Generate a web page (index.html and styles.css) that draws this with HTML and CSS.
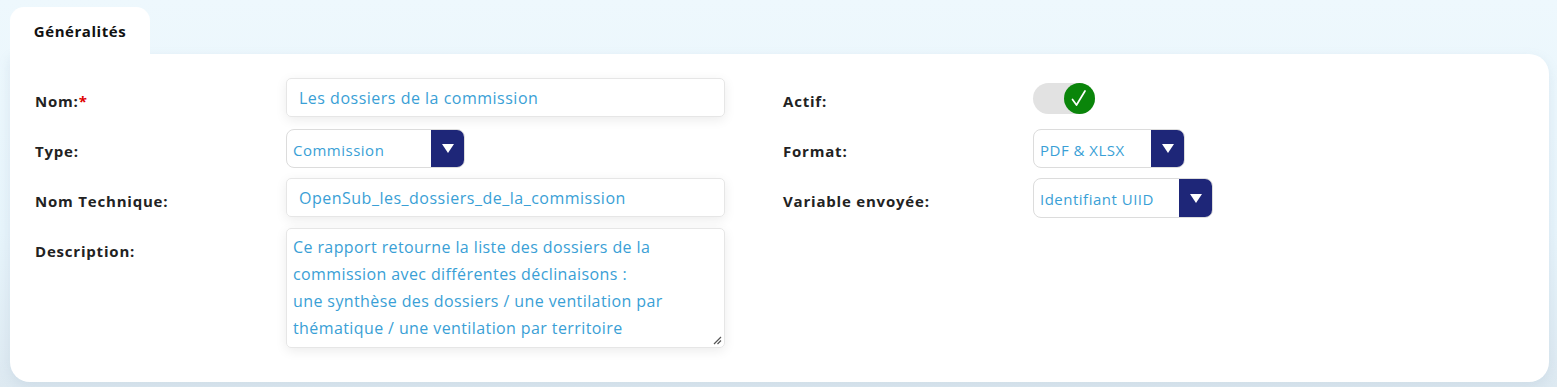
FILE: index.html
```html
<!DOCTYPE html>
<html lang="fr">
  <head>
    <title>Rapport - Généralités</title>
    <meta charset="UTF-8">
    <link rel="stylesheet" href="styles.css">
  </head>
  <body>
    <div class="page">
      <div class="tabs">
        <div class="tab tab-active">Généralités</div>
      </div>
      <div class="card">
        <div class="form-col form-left">
          <label class="label">Nom:<span class="required">*</span></label>
          <div class="input">Les dossiers de la commission</div>

          <label class="label">Type:</label>
          <div class="select select-type">
            <span class="select-value">Commission</span>
            <span class="select-btn"><span class="arrow"></span></span>
          </div>

          <label class="label">Nom Technique:</label>
          <div class="input">OpenSub_les_dossiers_de_la_commission</div>

          <label class="label">Description:</label>
          <div class="textarea">
            Ce rapport retourne la liste des dossiers de la<br>
            commission avec différentes déclinaisons :<br>
            une synthèse des dossiers / une ventilation par<br>
            thématique / une ventilation par territoire
            <svg class="grip" width="9" height="9" viewBox="0 0 9 9">
              <path d="M1 8 L8 1 M4.5 8 L8 4.5" stroke="#555" stroke-width="1.2"/>
            </svg>
          </div>
        </div>

        <div class="form-col form-right">
          <label class="label">Actif:</label>
          <div class="toggle-row">
            <div class="toggle">
              <span class="knob">
                <svg width="31" height="31" viewBox="0 0 31 31">
                  <path d="M8.5 16.5 L12.5 22 L21 8" fill="none" stroke="#fff" stroke-width="1.7" stroke-linecap="round" stroke-linejoin="round"/>
                </svg>
              </span>
            </div>
          </div>

          <label class="label">Format:</label>
          <div class="select select-format">
            <span class="select-value">PDF &amp; XLSX</span>
            <span class="select-btn"><span class="arrow"></span></span>
          </div>

          <label class="label">Variable envoyée:</label>
          <div class="select select-var">
            <span class="select-value">Identifiant UIID</span>
            <span class="select-btn"><span class="arrow"></span></span>
          </div>
        </div>
      </div>
    </div>
  </body>
</html>
```

FILE: styles.css
```css
body {
  margin: 0;
  padding: 0;
  background: linear-gradient(to bottom, #eef8fd 0%, #e7f4fb 60%, #dde9f1 100%);
  font-family: "Open Sans", "Noto Sans", sans-serif;
  height: 387px;
  overflow: hidden;
}

.page {
  padding: 7px 8px 0 10px;
}

.tabs {
  display: flex;
}

.tab {
  width: 140px;
  height: 47px;
  box-sizing: border-box;
  display: flex;
  align-items: center;
  justify-content: center;
  font-size: 15px;
  font-weight: 700;
  color: #111;
  letter-spacing: 0.55px;
}

.tab-active {
  background-color: #fff;
  border-radius: 14px 14px 0 0;
}

.card {
  display: flex;
  gap: 58px;
  background-color: #fff;
  border-radius: 0 20px 20px 20px;
  padding: 24px 25px 34px 25px;
  height: 328px;
  box-sizing: border-box;
  box-shadow: 0 4px 12px rgba(120, 150, 175, 0.15);
}

.form-col {
  display: grid;
  align-items: start;
  row-gap: 11px;
}

.form-left {
  grid-template-columns: 251px 439px;
  grid-template-rows: 39px 39px 39px 120px;
}

.form-right {
  grid-template-columns: 250px auto;
  grid-template-rows: 39px 39px 39px;
  align-content: start;
}

.label {
  padding-top: 13px;
  line-height: 20px;
  font-size: 15px;
  font-weight: 700;
  color: #222;
  letter-spacing: 0.8px;
}

.required {
  color: #e00000;
}

.input {
  height: 39px;
  box-sizing: border-box;
  border: 1px solid #e6e6e6;
  border-radius: 5px;
  padding: 0 12px;
  display: flex;
  align-items: center;
  font-size: 16px;
  color: #3a9fd6;
  letter-spacing: 0.5px;
  box-shadow: 0 3px 12px rgba(0, 0, 0, 0.08);
}

.textarea {
  position: relative;
  height: 120px;
  box-sizing: border-box;
  border: 1px solid #e6e6e6;
  border-radius: 5px;
  padding: 5px 6px;
  font-size: 16px;
  line-height: 27px;
  color: #3a9fd6;
  letter-spacing: 0.4px;
  box-shadow: 0 3px 12px rgba(0, 0, 0, 0.08);
}

.grip {
  position: absolute;
  right: 2px;
  bottom: 2px;
}

.select {
  display: flex;
  height: 39px;
  margin-top: 1px;
  box-sizing: border-box;
  border: 1px solid #dcdcdc;
  border-radius: 8px;
  overflow: hidden;
}

.select-type {
  width: 179px;
}

.select-format {
  width: 152px;
}

.select-var {
  width: 180px;
  margin-top: 0;
  height: 40px;
}

.select-value {
  flex: 1;
  display: flex;
  align-items: center;
  padding: 2px 0 0 6px;
  font-size: 15px;
  color: #3a9fd6;
  letter-spacing: 0.5px;
}

.select-btn {
  width: 34px;
  background-color: #1e2678;
  display: flex;
  align-items: center;
  justify-content: center;
  margin: -1px -1px -1px 0;
}

.arrow {
  width: 0;
  height: 0;
  border-left: 6px solid transparent;
  border-right: 6px solid transparent;
  border-top: 9px solid #fff;
}

.toggle-row {
  height: 39px;
  display: flex;
  align-items: center;
  padding-top: 2px;
  box-sizing: border-box;
}

.toggle {
  width: 62px;
  height: 31px;
  border-radius: 16px;
  background-color: #e2e2e2;
  display: flex;
  justify-content: flex-end;
}

.knob {
  width: 31px;
  height: 31px;
  border-radius: 50%;
  background-color: #0a850a;
  display: flex;
}
```
